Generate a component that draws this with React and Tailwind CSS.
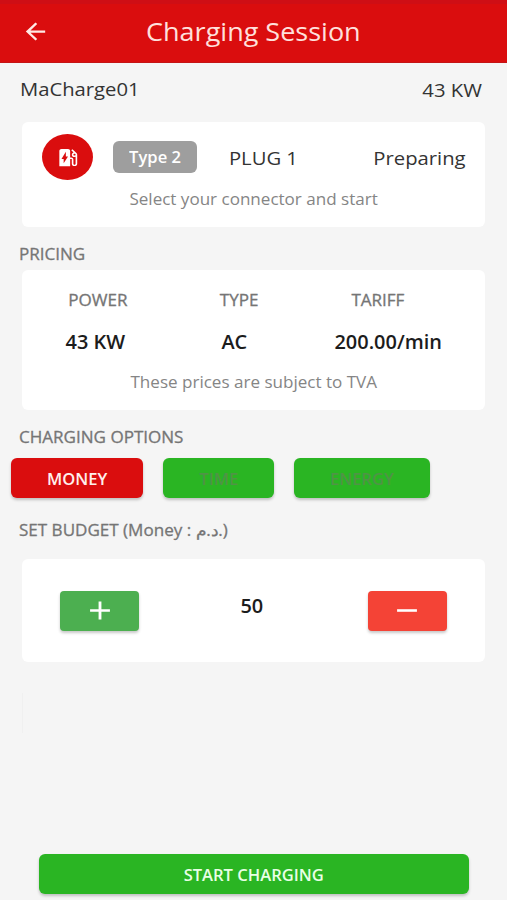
import { MdArrowBack, MdAdd, MdRemove, MdEvStation } from "react-icons/md";

function Text({ scale = "scale-x-[1.065]", className = "", children }) {
  return (
    <span className={`inline-block whitespace-nowrap leading-6 ${scale} ${className}`}>
      {children}
    </span>
  );
}

function SectionTitle({ className = "", children }) {
  return (
    <h2 className={`flex h-6 pl-[18.5px] ${className}`}>
      <Text className="origin-left text-[16px] text-[#757575] [-webkit-text-stroke:0.3px_#757575]">{children}</Text>
    </h2>
  );
}

function Card({ className = "", children }) {
  return <section className={`mx-[22px] w-[463px] rounded-md bg-white ${className}`}>{children}</section>;
}

function Option({ className = "", children }) {
  return (
    <button className={`flex h-10 items-center justify-center rounded-md pt-px font-semibold shadow-[0_2px_3px_rgba(0,0,0,0.22)] ${className}`}>
      <Text scale="scale-x-[1.035]" className="text-[16px]">{children}</Text>
    </button>
  );
}

const prices = [
  { label: "POWER", value: "43 KW", head: "w-[152px]", cell: "w-[146px]" },
  { label: "TYPE", value: "AC", head: "w-[131px]", cell: "w-[133px]" },
  { label: "TARIFF", value: "200.00/min", head: "w-[146px]", cell: "w-[174px]" },
];

export default function App() {
  return (
    <main className="flex h-[900px] w-[507px] flex-col overflow-hidden bg-[#f5f5f5] font-['Open_Sans','Noto_Sans',sans-serif] text-[#333]">
      <header className="flex h-[63px] shrink-0 items-center border-t-4 border-b border-t-[#cf0e15] border-b-[#c41416] bg-[#da0d0e] pb-[3px] pl-[21px]">
        <MdArrowBack preserveAspectRatio="none" className="h-[27px] w-[29px] text-[#ffe9e4]" />
        <h1 className="flex w-[406px] justify-center pb-0.5">
          <Text scale="scale-x-[1.08]" className="text-[25px] text-[#ffe0dc]">Charging Session</Text>
        </h1>
      </header>

      <div className="flex h-[59px] shrink-0 justify-between pt-[14px] pr-[25px] pl-[20px]">
        <Text className="origin-left text-[19px]">MaCharge01</Text>
        <Text className="origin-right pt-px text-[19px]">43 KW</Text>
      </div>

      <Card className="h-[105px] shrink-0">
        <div className="flex h-[70px] items-center pl-5">
          <div className="flex h-[46px] w-[51px] items-center justify-center rounded-[50%] bg-[#da0d0e]">
            <MdEvStation preserveAspectRatio="none" className="h-[23px] w-[26px] text-white" />
          </div>
          <div className="ml-5 flex h-8 w-[84px] items-center justify-center rounded-md bg-[#9e9e9e]">
            <Text scale="scale-x-[1.035]" className="text-[16px] font-semibold text-white">Type 2</Text>
          </div>
          <div className="flex w-[132px] justify-center">
            <Text className="pt-px text-[19px]">PLUG 1</Text>
          </div>
          <div className="flex flex-1 justify-end pr-[19px]">
            <Text className="origin-right pt-px text-[19px]">Preparing</Text>
          </div>
        </div>
        <p className="-mt-[5px] flex justify-center">
          <Text className="text-[16px] text-[#858585]">Select your connector and start</Text>
        </p>
      </Card>

      <SectionTitle className="mt-[15px]">PRICING</SectionTitle>
      <Card className="mt-1 h-[140px] shrink-0">
        <div className="flex pt-[18px]">
          {prices.map((p) => (
            <div key={p.label} className={`flex justify-center ${p.head}`}>
              <Text className="text-[16px] text-[#757575] [-webkit-text-stroke:0.3px_#757575]">{p.label}</Text>
            </div>
          ))}
        </div>
        <div className="mt-[18px] flex">
          {prices.map((p) => (
            <div key={p.label} className={`flex justify-center ${p.cell}`}>
              <Text scale="scale-x-[1.05]" className="text-[19px] font-semibold text-[#1c1c1c]">{p.value}</Text>
            </div>
          ))}
        </div>
        <p className="mt-4 flex justify-center">
          <Text className="text-[16px] text-[#858585]">These prices are subject to TVA</Text>
        </p>
      </Card>

      <SectionTitle className="mt-[15px]">CHARGING OPTIONS</SectionTitle>
      <div className="mt-[9px] flex gap-5 pl-[11px]">
        <Option className="w-[132px] bg-[#da0d0e] text-[#ffefec]">MONEY</Option>
        <Option className="w-[111px] bg-[#2ab523] text-[#4f9446]">TIME</Option>
        <Option className="w-[136px] bg-[#2ab523] text-[#4f9446]">ENERGY</Option>
      </div>

      <SectionTitle className="mt-5">SET BUDGET (Money : د.م.)</SectionTitle>
      <Card className="mt-[17px] flex h-[103px] shrink-0 items-center justify-between px-[38px]">
        <button aria-label="Increase" className="flex h-10 w-[79px] items-center justify-center rounded bg-[#4caf50] shadow-[0_2px_3px_rgba(0,0,0,0.22)]">
          <MdAdd preserveAspectRatio="none" className="h-[31px] w-[34px] text-white" />
        </button>
        <Text scale="scale-x-[1.05]" className="-mt-2.5 mr-[3px] text-[19px] font-semibold text-[#1c1c1c]">50</Text>
        <button aria-label="Decrease" className="flex h-10 w-[79px] items-center justify-center rounded bg-[#f44336] shadow-[0_2px_3px_rgba(0,0,0,0.22)]">
          <MdRemove preserveAspectRatio="none" className="h-[31px] w-[34px] text-white" />
        </button>
      </Card>

      <div className="mt-[31px] ml-[22px] h-10 w-px bg-[#f0f0f0]" />
      <Option className="mx-[39px] mt-auto mb-[6px] w-[430px] shrink-0 bg-[#2ab523] text-[#e8ffe5]">START CHARGING</Option>
    </main>
  );
}
